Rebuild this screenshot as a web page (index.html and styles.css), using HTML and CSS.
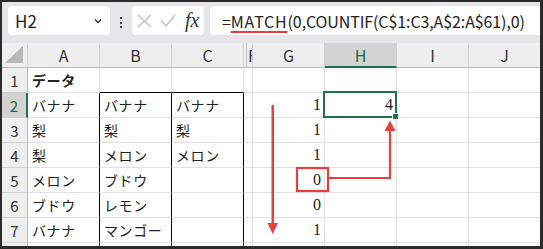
FILE: index.html
```html
<!DOCTYPE html>
<html lang="ja">

<head>
    <title>MATCH COUNTIF</title>
    <meta charset="UTF-8">
    <link rel="stylesheet" href="styles.css">
</head>

<body>
    <div class="frame">
        <div class="window">
            <div class="toolbar">
                <div class="namebox">
                    <span>H2</span>
                    <svg class="chevron" width="8" height="6" viewBox="0 0 8 6"><path d="M1 1.5 L4 4.5 L7 1.5" fill="none" stroke="#333" stroke-width="1.3"/></svg>
                </div>
                <div class="grip"><i></i><i></i><i></i></div>
                <div class="fxbox">
                    <svg width="15" height="14" viewBox="0 0 15 14"><path d="M1 1 L14 13 M14 1 L1 13" stroke="#bdbdbd" stroke-width="1.3" fill="none"/></svg>
                    <svg width="16" height="14" viewBox="0 0 16 14"><path d="M1 6 L6 12 L15 1" stroke="#bdbdbd" stroke-width="1.3" fill="none"/></svg>
                    <span class="fx">fx</span>
                </div>
                <div class="formula">=<span class="fn">MATCH</span>(0,COUNTIF(C$1:C3,A$2:A$61),0)</div>
            </div>

            <div class="sheet">
                <div class="corner"><svg width="20" height="18" viewBox="0 0 20 18"><path d="M18 0 L18 17 L0 17 Z" fill="#b7b7b7"/></svg></div>
                <div class="colhead">A</div>
                <div class="colhead">B</div>
                <div class="colhead">C</div>
                <div class="colhead hidden"></div>
                <div class="colhead narrow">F</div>
                <div class="colhead">G</div>
                <div class="colhead active">H</div>
                <div class="colhead">I</div>
                <div class="colhead">J</div>

                <div class="rowhead">1</div>
                <div class="cell bold">データ</div>
                <div class="cell box-top"></div>
                <div class="cell box-top"></div>
                <div class="cell gap"></div>
                <div class="cell"></div>
                <div class="cell"></div>
                <div class="cell"></div>
                <div class="cell"></div>

                <div class="rowhead active">2</div>
                <div class="cell box-left">バナナ</div>
                <div class="cell box-in">バナナ</div>
                <div class="cell box-in">バナナ</div>
                <div class="cell gap"></div>
                <div class="cell num">1</div>
                <div class="cell num selected">4<span class="handle"></span></div>
                <div class="cell"></div>
                <div class="cell"></div>

                <div class="rowhead">3</div>
                <div class="cell box-left">梨</div>
                <div class="cell box-in">梨</div>
                <div class="cell box-in">梨</div>
                <div class="cell gap"></div>
                <div class="cell num">1</div>
                <div class="cell"></div>
                <div class="cell"></div>
                <div class="cell"></div>

                <div class="rowhead">4</div>
                <div class="cell box-left">梨</div>
                <div class="cell box-in">メロン</div>
                <div class="cell box-in">メロン</div>
                <div class="cell gap"></div>
                <div class="cell num">1</div>
                <div class="cell"></div>
                <div class="cell"></div>
                <div class="cell"></div>

                <div class="rowhead">5</div>
                <div class="cell box-left">メロン</div>
                <div class="cell box-in">ブドウ</div>
                <div class="cell box-in"></div>
                <div class="cell gap"></div>
                <div class="cell num">0</div>
                <div class="cell"></div>
                <div class="cell"></div>
                <div class="cell"></div>

                <div class="rowhead">6</div>
                <div class="cell box-left">ブドウ</div>
                <div class="cell box-in">レモン</div>
                <div class="cell box-in"></div>
                <div class="cell gap"></div>
                <div class="cell num">0</div>
                <div class="cell"></div>
                <div class="cell"></div>
                <div class="cell"></div>

                <div class="rowhead">7</div>
                <div class="cell box-left">バナナ</div>
                <div class="cell box-in">マンゴー</div>
                <div class="cell box-in"></div>
                <div class="cell gap"></div>
                <div class="cell num">1</div>
                <div class="cell"></div>
                <div class="cell"></div>
                <div class="cell"></div>

                <div class="rowhead"></div>
                <div class="cell box-left"></div>
                <div class="cell box-in"></div>
                <div class="cell box-in"></div>
                <div class="cell gap"></div>
                <div class="cell"></div>
                <div class="cell"></div>
                <div class="cell"></div>
                <div class="cell"></div>
            </div>

            <!-- red notes drawn over the sheet, page coordinates -->
            <svg class="notes" width="543" height="249" viewBox="0 0 543 249">
                <rect x="271.5" y="105" width="2.5" height="120" fill="#e8403f"/>
                <path d="M267.5 223 L278 223 L272.75 234 Z" fill="#e8403f"/>
                <rect x="297" y="168" width="31" height="23" fill="none" stroke="#e8403f" stroke-width="2.2"/>
                <path d="M328 178 L390 178 L390 129" fill="none" stroke="#e8403f" stroke-width="2.2"/>
                <path d="M384.5 131 L395.5 131 L390 120.5 Z" fill="#e8403f"/>
            </svg>
        </div>
    </div>
</body>

</html>
```

FILE: styles.css
```css
body {
    margin: 0;
    background: #2b2b2b;
    font-family: "Noto Sans CJK JP", "Liberation Sans", sans-serif;
    color: #222;
}

.frame {
    padding: 2px 3px 3px 2px;
    width: 538px;
    height: 244px;
}

.window {
    position: relative;
    width: 538px;
    height: 244px;
    overflow: hidden;
    background: #fff;
}

/* formula bar */
.toolbar {
    display: flex;
    height: 41px;
    padding: 4px 0 0 6px;
    box-sizing: border-box;
    background: #e6e6e9;
}

.namebox, .fxbox, .formula {
    height: 29px;
    background: #fff;
    border-radius: 4px;
    box-sizing: border-box;
    display: flex;
    align-items: center;
}

.namebox {
    width: 102px;
    padding: 0 8px 0 7px;
    justify-content: space-between;
    font-size: 17px;
}

.grip {
    width: 22px;
    display: flex;
    flex-direction: column;
    align-items: center;
    justify-content: center;
    gap: 2.5px;
    padding-bottom: 4px;
    box-sizing: border-box;
}

.grip i {
    width: 2px;
    height: 2px;
    background: #444;
}

.fxbox {
    width: 72px;
    padding-left: 5px;
    gap: 8px;
}

.fx {
    font-family: "Liberation Serif", serif;
    font-style: italic;
    font-size: 20px;
    color: #333;
    margin-left: 1px;
}

.formula {
    flex: 1;
    margin: 0 -10px 0 6px;
    padding-left: 12px;
    font-size: 16px;
    letter-spacing: -0.1px;
    white-space: nowrap;
}

.fn {
    letter-spacing: 0.8px;
    text-decoration: underline;
    text-decoration-color: #e8403f;
    text-decoration-thickness: 2px;
    text-underline-offset: 3px;
}

/* grid */
.sheet {
    display: grid;
    grid-template-columns: 26px 72px 72px 72px 3px 6px 72px 72px 72px 72px;
    grid-auto-rows: 25px;
}

.sheet > div {
    box-sizing: border-box;
    display: flex;
    align-items: center;
    overflow: hidden;
    white-space: nowrap;
}

.corner, .colhead, .rowhead {
    background: #efefef;
    border-right: 1px solid #d0d0d0;
    border-bottom: 1px solid #b9b9b9;
    justify-content: center;
    font-size: 16px;
    color: #333;
}

.corner {
    align-items: flex-end !important;
    justify-content: flex-end;
    padding: 0 2px 3px 0;
}

.colhead.hidden {
    border-right: 1px solid #c0c0c0;
}

.colhead.narrow {
    justify-content: flex-start;
    padding-left: 1px;
}

.rowhead {
    font-size: 15px;
    border-bottom-color: #d0d0d0;
    border-right-color: #b9b9b9;
}

.colhead.active {
    background: #d3d3d3;
    border-bottom: 2px solid #217346;
    color: #1d6b45;
}

.rowhead.active {
    background: #d3d3d3;
    border-right: 2px solid #217346;
    color: #1d6b45;
}

.cell {
    border-right: 1px solid #e1e1e1;
    border-bottom: 1px solid #e1e1e1;
    padding: 0 4px;
    font-size: 14px;
    letter-spacing: 0.6px;
}

.cell.gap {
    grid-column: span 2;
}

.cell.bold {
    font-weight: bold;
}

.box-top {
    border-bottom-color: #000;
}

.box-left, .box-in {
    border-right-color: #000;
}

.num {
    justify-content: flex-end;
    padding-right: 3px;
    font-family: "Liberation Serif", serif;
    font-size: 16px;
    letter-spacing: 0;
}

.selected {
    position: relative;
    overflow: visible !important;
}

.selected::before {
    content: "";
    position: absolute;
    left: -2px;
    top: -2px;
    right: -1px;
    bottom: -1px;
    border: 2px solid #217346;
}

.handle {
    position: absolute;
    right: -3px;
    bottom: -3px;
    width: 5px;
    height: 5px;
    background: #217346;
    border: 1px solid #fff;
}

.notes {
    position: absolute;
    left: -2px;
    top: -2px;
    pointer-events: none;
}
```
